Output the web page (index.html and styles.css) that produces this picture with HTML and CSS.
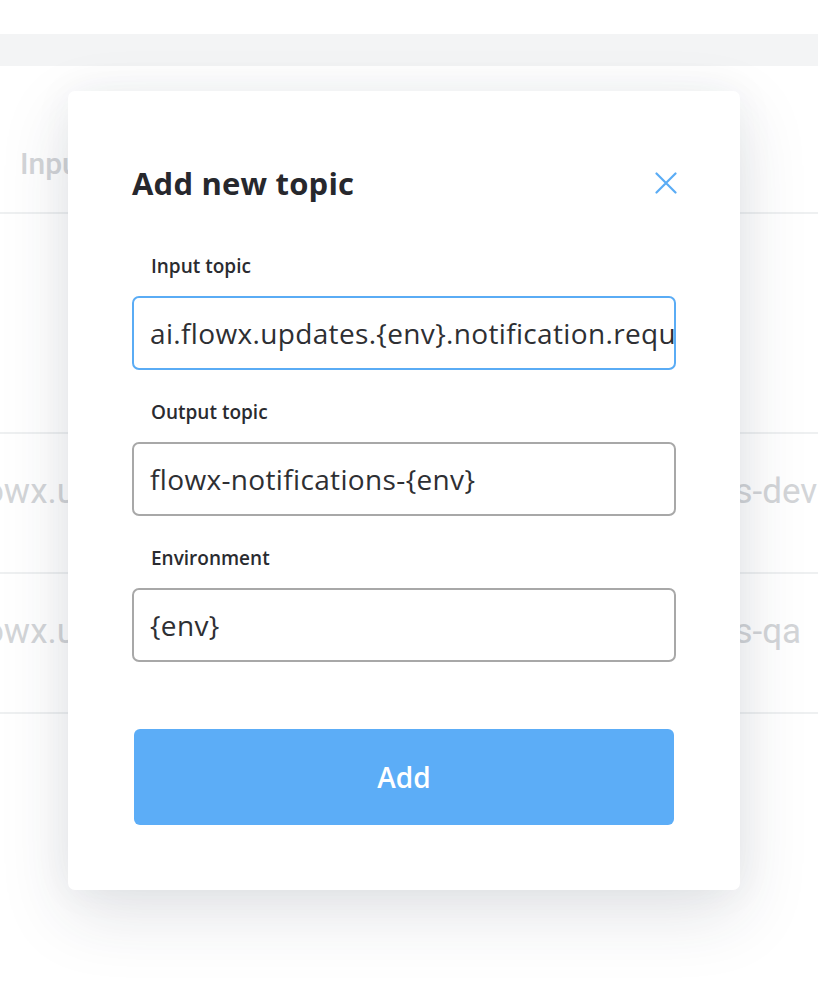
FILE: index.html
```html
<!DOCTYPE html>
<html>
<head>
<meta charset="utf-8">
<link rel="stylesheet" href="styles.css">
</head>
<body>
<div class="page">
  <div class="topbar"></div>
  <div class="table">
    <div class="thead"><span class="th-left">Input topic</span></div>
    <div class="row tall"></div>
    <div class="row"><span class="cell-left">flowx.updates.dev.notification.request</span><span class="cell-right">flowx-notifications-dev</span></div>
    <div class="row"><span class="cell-left">flowx.updates.qa.notification.request</span><span class="cell-right">flowx-notifications-qa</span></div>
  </div>

  <div class="modal">
    <div class="modal-head">
      <h2 class="title">Add new topic</h2>
      <button class="close" aria-label="Close">
        <svg width="22" height="22" viewBox="0 0 22 22"><path d="M1.5 1.5 L20.5 20.5 M20.5 1.5 L1.5 20.5" stroke="#5aacf5" stroke-width="2.2" stroke-linecap="round" fill="none"/></svg>
      </button>
    </div>
    <div class="field first">
      <label class="label">Input topic</label>
      <div class="input focused">ai.flowx.updates.{env}.notification.request.v1</div>
    </div>
    <div class="field">
      <label class="label">Output topic</label>
      <div class="input">flowx-notifications-{env}</div>
    </div>
    <div class="field">
      <label class="label">Environment</label>
      <div class="input">{env}</div>
    </div>
    <button class="add">Add</button>
  </div>
</div>
</body>
</html>
```
FILE: styles.css
```css
* { box-sizing: border-box; }
html, body { margin: 0; padding: 0; background: #ffffff; }
body { width: 818px; height: 984px; overflow: hidden; }
.page { position: relative; width: 818px; height: 984px; overflow: hidden; }

.topbar { margin-top: 34px; height: 32px; background: #f3f4f5; }

.table { font-family: Roboto, "Liberation Sans", sans-serif; color: #d3d5d8; }
.thead { height: 148px; border-bottom: 2px solid #eef0f1; padding: 80px 0 0 20px; font-size: 30px; font-weight: 500; line-height: 36px; }
.row { height: 140px; border-bottom: 2px solid #eef0f1; display: flex; align-items: flex-start; padding-top: 38px; line-height: 40px; font-size: 35px; white-space: nowrap; overflow: hidden; }
.row.tall { height: 220px; }
.cell-left { width: 480px; overflow: hidden; flex: none; text-indent: -36px; }
.cell-right { margin-left: -14px; }

.modal {
  position: absolute; left: 68px; top: 91px; width: 672px; height: 799px;
  background: #fff; border-radius: 7px;
  box-shadow: 0 24px 70px rgba(40, 50, 70, 0.13), 0 0 40px rgba(40, 50, 70, 0.05);
  padding: 62px 64px 0 64px;
  font-family: "Open Sans", Lato, sans-serif;
  display: flex; flex-direction: column;
}
.modal-head { display: flex; justify-content: space-between; align-items: center; height: 60px; }
.title { margin: 0; font-size: 31px; font-weight: 700; color: #27282d; letter-spacing: 0.2px; }
.close { background: none; border: 0; padding: 0; width: 22px; height: 22px; margin-right: -1px; cursor: pointer; }
.close svg { display: block; }

.field { display: flex; flex-direction: column; }
.label { font-size: 19px; font-weight: 600; color: #2a2b30; padding-left: 19px; margin-top: 28px; height: 28px; line-height: 28px; }
.field.first .label { margin-top: 39px; }
.input {
  margin-top: 16px; height: 74px; border: 2px solid #a8a8a8; border-radius: 7px;
  padding: 0 16px; font-size: 28px; letter-spacing: 0.35px; color: #2e2f33; display: flex; align-items: center;
  white-space: nowrap; overflow: hidden;
}
.input.focused { border-color: #5aacf5; }

.add {
  margin-top: 67px; height: 96px; width: 540px; margin-left: 2px;
  background: #5cadf7; border: 0; border-radius: 6px; color: #fff;
  font-family: "Open Sans", Lato, sans-serif; font-size: 28px; font-weight: 600;
}
```
